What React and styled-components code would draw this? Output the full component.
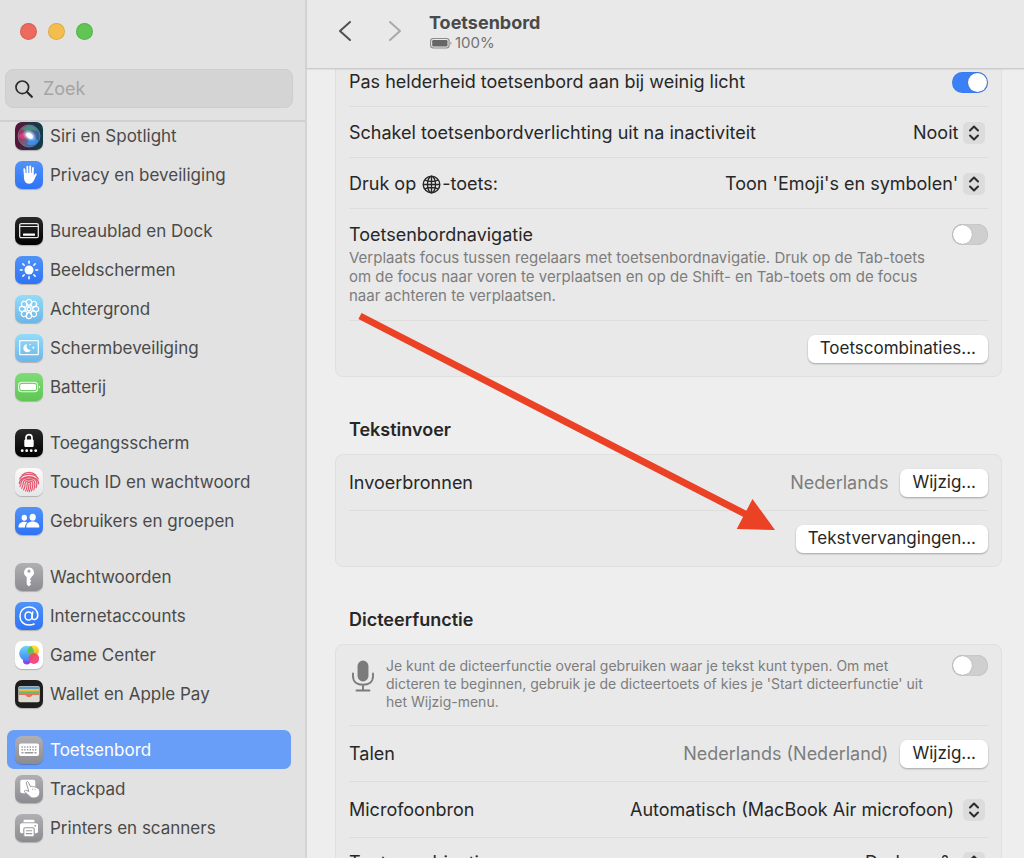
import React from "react";
import styled, { createGlobalStyle, css } from "styled-components";

const GlobalStyle = createGlobalStyle`
  *, *::before, *::after { box-sizing: border-box; }
  body {
    margin: 0;
    background: #eeeeee;
    font-family: Inter, "Liberation Sans", sans-serif;
    font-size: 18px;
    line-height: 22px;
    color: #272727;
  }
  button, input, select { font: inherit; color: inherit; }
`;

const Window = styled.div`
  position: relative;
  display: flex;
  height: 100vh;
  overflow: hidden;
`;

/* ---------- Sidebar ---------- */

const Sidebar = styled.aside`
  flex: 0 0 307px;
  display: flex;
  flex-direction: column;
  background: #e2e2e2;
  border-right: 2px solid #d3d3d3;
  color: #4a4a4a;
  overflow: hidden;
`;

const SidebarTop = styled.div`
  flex: none;
  position: relative;
  z-index: 1;
  background: #e2e2e2;
  border-bottom: 2px solid #d0d0d0;
  padding: 23px 12px 12px 5px;
`;

const TrafficLights = styled.div`
  display: flex;
  gap: 11px;
  padding-left: 15px;
  margin-bottom: 29px;
`;

const Light = styled.button`
  width: 17px;
  height: 17px;
  padding: 0;
  border: 1px solid rgba(0, 0, 0, 0.1);
  border-radius: 50%;
  background: ${(p) => p.$color};
`;

const SearchField = styled.label`
  display: flex;
  align-items: center;
  gap: 10px;
  height: 39px;
  padding: 0 9px;
  border: 1px solid #cecece;
  border-radius: 8px;
  background: #d4d4d4;
  svg { flex: none; }
`;

const SearchInput = styled.input`
  flex: 1;
  min-width: 0;
  border: 0;
  padding: 0;
  outline: 0;
  background: transparent;
  &::placeholder { color: #a4a4a4; opacity: 1; }
`;

const Nav = styled.nav`
  display: flex;
  flex-direction: column;
  gap: 17px;
  margin-top: -6px;
  padding: 0 14px 0 7px;
  font-size: 17px;
`;

const NavGroup = styled.div`
  display: flex;
  flex-direction: column;
`;

const NavItem = styled.a`
  display: flex;
  align-items: center;
  gap: 7px;
  height: 39px;
  padding: 0 8px;
  border-radius: 7px;
  color: ${(p) => (p.$active ? "#ffffff" : "#4a4a4a")};
  background: ${(p) => (p.$active ? "#689df8" : "transparent")};
  text-decoration: none;
  white-space: nowrap;
`;

const tones = {
  blue: "linear-gradient(#4f93f8, #2f73f6)",
  black: "linear-gradient(#2a2a2a, #000000)",
  sky: "linear-gradient(#93dcf9, #6db5e8)",
  green: "linear-gradient(#7fdc78, #5fc653)",
  white: "linear-gradient(#fbfbfb, #e6e6e6)",
  gray: "linear-gradient(#b0b0b4, #8b8b90)",
  plain: "#ffffff",
  wallet: "#1e1e1e",
  siri: "linear-gradient(90deg, #5b1236, #26304a 55%, #0f3d45)",
};

const Tile = styled.span`
  flex: none;
  display: grid;
  width: 28px;
  height: 28px;
  border-radius: 7px;
  overflow: hidden;
  background: ${(p) => tones[p.$tone]};
  box-shadow: 0 1px 1px rgba(0, 0, 0, 0.22);
`;

/* ---------- Main pane ---------- */

const Main = styled.main`
  flex: 1;
  min-width: 0;
  display: flex;
  flex-direction: column;
  background: #eeeeee;
`;

const Toolbar = styled.header`
  flex: none;
  position: relative;
  z-index: 1;
  display: flex;
  align-items: center;
  height: 69px;
  padding: 0 28px 6px;
  background: #e9e9e9;
  border-bottom: 1px solid #cbcbcb;
  box-shadow: 0 1px 1px rgba(0, 0, 0, 0.06);
`;

const ArrowButton = styled.button`
  display: grid;
  place-items: center;
  width: 20px;
  height: 28px;
  margin-right: 30px;
  padding: 0;
  border: 0;
  background: transparent;
  color: ${(p) => (p.disabled ? "#a9a9a9" : "#505050")};
`;

const TitleBlock = styled.div`
  display: flex;
  flex-direction: column;
  margin-left: -6px;
  padding-top: 2px;
`;

const Title = styled.h1`
  margin: 0;
  font-size: 18px;
  line-height: 21px;
  font-weight: 700;
  color: #4a4a4a;
`;

const Status = styled.div`
  display: flex;
  align-items: center;
  gap: 2px;
  font-size: 15px;
  line-height: 20px;
  color: #737373;
`;

const Content = styled.div`
  flex: 1;
  min-height: 0;
  overflow: hidden;
  padding: 0 22px 0 28px;
`;

const ScrolledBody = styled.div`
  margin-top: -14px;
`;

const Card = styled.section`
  border: 1px solid #e0e0e0;
  border-radius: 8px;
  background: #e9e9e9;
  padding: 0 13px;
`;

const SectionTitle = styled.h2`
  display: flex;
  align-items: center;
  height: 77px;
  margin: 0;
  padding: 29px 14px 0;
  font-size: 18px;
  font-weight: 600;
  line-height: 22px;
`;

const Row = styled.div`
  display: flex;
  align-items: center;
  justify-content: space-between;
  gap: 12px;
  min-height: ${(p) => (p.$tall ? 56 : 51)}px;
  padding: ${(p) => p.$top || (p.$tall ? "0" : "2px 0 0")};
  border-bottom: 1px solid #dddddd;
  &:last-child {
    min-height: ${(p) => (p.$tall ? 55 : 48)}px;
    border-bottom: 0;
  }
  ${(p) =>
    p.$top &&
    css`
      align-items: flex-start;
    `}
`;

const Label = styled.label`
  display: inline-flex;
  align-items: center;
  gap: 1px;
  white-space: pre;
`;

const Stack = styled.div`
  display: flex;
  flex-direction: column;
  gap: 2px;
  max-width: 598px;
`;

const Description = styled.p`
  margin: 0;
  font-size: ${(p) => (p.$small ? 14 : 15)}px;
  line-height: ${(p) => (p.$small ? 18 : 19)}px;
  color: #7d7d7d;
`;

const DictationInfo = styled.div`
  display: flex;
  gap: 11px;
  padding: 2px 0 0 2px;
  svg { flex: none; margin-top: 3px; }
`;

const Trailing = styled.div`
  display: flex;
  align-items: center;
  gap: 12px;
  margin-left: auto;
  color: #7d7d7d;
  white-space: nowrap;
`;

const PushButton = styled.button`
  height: 28px;
  padding: 0 12px 1px;
  border: 0;
  border-radius: 7px;
  background: #ffffff;
  box-shadow: 0 1px 2px rgba(0, 0, 0, 0.3);
  font-size: 17px;
  line-height: 22px;
  color: #272727;
  white-space: nowrap;
`;

const Switch = styled.input.attrs({ type: "checkbox" })`
  appearance: none;
  flex: none;
  display: flex;
  align-items: center;
  width: 36px;
  height: 21px;
  margin: 0;
  padding: 0 1px;
  border-radius: 11px;
  background: #cfcfcf;
  box-shadow: inset 0 0 1px rgba(0, 0, 0, 0.3);
  &::before {
    content: "";
    width: 19px;
    height: 19px;
    border-radius: 50%;
    background: #ffffff;
    box-shadow: 0 0 1px rgba(0, 0, 0, 0.4);
  }
  &:checked {
    justify-content: flex-end;
    background: #3b80f7;
  }
`;

const Popup = styled.div`
  display: grid;
  align-items: center;
  margin-right: 3px;
  > * { grid-area: 1 / 1; }
`;

const Select = styled.select`
  appearance: none;
  border: 0;
  margin: 0;
  padding: 0 ${(p) => p.$inset}px 0 0;
  background: transparent;
  line-height: 22px;
`;

const PopupIcons = styled.span`
  justify-self: end;
  display: flex;
  align-items: center;
  gap: 12px;
  pointer-events: none;
`;

const Stepper = styled.span`
  display: grid;
  place-items: center;
  width: 22px;
  height: 22px;
  border-radius: 5px;
  background: #dcdcdc;
`;

const Annotation = styled.svg`
  position: absolute;
  left: 357px;
  top: 310px;
  z-index: 2;
  pointer-events: none;
`;

/* ---------- Icons ---------- */

const Svg = ({ children, ...rest }) => (
  <svg width="28" height="28" viewBox="0 0 28 28" fill="none" aria-hidden="true" {...rest}>
    {children}
  </svg>
);

const petals = [0, 45, 90, 135, 180, 225, 270, 315];

const icons = {
  siri: (
    <Svg>
      <defs>
        <radialGradient id="siriGlow">
          <stop offset="0" stopColor="#ffffff" />
          <stop offset="0.4" stopColor="#e6f0ff" stopOpacity="0.9" />
          <stop offset="1" stopColor="#8ab4ff" stopOpacity="0" />
        </radialGradient>
        <linearGradient id="siriBall" x1="0" y1="0.3" x2="1" y2="0.7">
          <stop offset="0" stopColor="#d4285f" />
          <stop offset="0.45" stopColor="#8c7a98" />
          <stop offset="1" stopColor="#1f6fd0" />
        </linearGradient>
      </defs>
      <circle cx="14" cy="14" r="11" fill="url(#siriBall)" fillOpacity="0.7" stroke="#8295a5" strokeOpacity="0.6" />
      <path d="M6 8c4-5.500 13-5.500 17 1-4-2-8-1-10 1-2-2-5-2.500-7-2z" fill="#2fa584" fillOpacity="0.75" />
      <path d="M4 13c3-3 7-2 10 1-2 3-7 4-10 1z" fill="#ef3f72" fillOpacity="0.75" />
      <path d="M14 15c4 0 8 1 9 4-3 5-8 5-11 3z" fill="#3c9bff" fillOpacity="0.75" />
      <ellipse cx="14.500" cy="13.500" rx="8" ry="5.500" transform="rotate(30 14.500 13.500)" fill="url(#siriGlow)" />
      <ellipse cx="14.500" cy="13.800" rx="3.800" ry="2.200" transform="rotate(40 14.500 13.800)" fill="#fff" />
    </Svg>
  ),
  hand: (
    <Svg>
      <g stroke="#fff" strokeWidth="1.900" strokeLinecap="round">
        <path d="M9.300 8.200 10 15M12.300 5.800l.2 9M15.200 5.500v9M18 7l-.5 8M20.800 13.300 18.300 18" />
      </g>
      <path d="M8.900 12h9.800v5.500l1.300-1.800c-.6 3.700-2.200 7-6 7-3.600 0-5-3-5.100-6.700z" fill="#fff" />
    </Svg>
  ),
  dock: (
    <Svg>
      <rect x="4.700" y="6.700" width="18.600" height="14" rx="1.500" stroke="#e8e8e8" strokeWidth="1.300" />
      <path d="M5 9.500h18" stroke="#e8e8e8" />
      <rect x="8" y="16.500" width="12" height="2.300" rx=".5" fill="#fff" />
    </Svg>
  ),
  sun: (
    <Svg>
      <circle cx="14" cy="14" r="4.500" fill="#fff" />
      <g stroke="#fff" strokeWidth="1.500" strokeLinecap="round">
        {petals.map((a) => (
          <path key={a} d="M14 5.300v1.900" transform={`rotate(${a} 14 14)`} />
        ))}
      </g>
    </Svg>
  ),
  flower: (
    <Svg>
      <g stroke="#fff" strokeWidth="1.200">
        {petals.map((a) => (
          <ellipse key={a} cx="14" cy="7.300" rx="2.700" ry="3" transform={`rotate(${a} 14 14)`} />
        ))}
        {petals.map((a) => (
          <path key={a} d="M14 12.500v-2.200" transform={`rotate(${a} 14 14)`} />
        ))}
      </g>
      <circle cx="14" cy="14" r="1.900" stroke="#fff" strokeWidth="1.100" />
    </Svg>
  ),
  screensaver: (
    <Svg>
      <rect x="4.700" y="6.700" width="18.600" height="14" rx=".6" stroke="#f4fbff" strokeWidth="1.300" />
      <path d="M12 10.200a4 4 0 1 0 4 5.600 3.800 3.800 0 0 1-4-5.600z" fill="#fff" />
      <path d="m18.300 12 .5 1.200 1.200.5-1.200.5-.5 1.200-.5-1.200-1.200-.5 1.200-.5zM15 9.500l.3.800.8.300-.8.300-.3.800-.3-.8-.8-.3.800-.3z" fill="#fff" />
    </Svg>
  ),
  battery: (
    <Svg>
      <rect x="3.600" y="9.300" width="19" height="9.400" rx="3" stroke="#fff" strokeOpacity=".85" strokeWidth="1.100" />
      <rect x="5.200" y="10.900" width="15.800" height="6.200" rx="1.500" fill="#fff" />
      <path d="M24 12.700c1.300.4 1.300 2.200 0 2.600z" fill="#fff" />
    </Svg>
  ),
  lock: (
    <Svg>
      <path d="M11 11V8.600c0-4 6-4 6 0V11" stroke="#fff" strokeWidth="1.700" />
      <rect x="9.300" y="10.500" width="9.400" height="7.500" rx="1.200" fill="#fff" />
      {[7.200, 11.700, 16.200, 20.700].map((x) => (
        <circle key={x} cx={x} cy="21.700" r="1.400" fill="#fff" />
      ))}
    </Svg>
  ),
  touch: (
    <Svg>
      <g stroke="#e4566e" strokeWidth="1.200" strokeLinecap="round">
        <path d="M7 7.200c4-3.900 10-3.900 14 0" />
        <path d="M4.700 11c2.700-6.200 15.900-6.200 18.600 0" />
        <path d="M4.400 15.800c-.4-9.500 19.600-9.500 19.200 0M5 18.500c1-1 1.100-2.200 1.200-3.700.4-6.700 15.200-6.700 15.600 0 .1 1.900-.1 3.200-.6 4.800" />
        <path d="M6.700 20.300c1.300-1.700 1.400-3.600 1.500-5.200.3-5.100 11.300-5.100 11.600 0 .1 2.500-.2 4.500-1 6.700" />
        <path d="M8.500 21.800c1.500-2 1.600-4.500 1.700-6.300.2-3.600 7.400-3.600 7.600 0 .1 2.600-.3 5-1.300 7.500" />
        <path d="M10.600 23c1.400-2.300 1.600-5 1.600-7 .1-2.200 3.500-2.200 3.600 0 .1 2.700-.4 5.200-1.500 7.700" />
        <path d="M14 16c0 2.600-.4 4.900-1.400 7.300" />
      </g>
    </Svg>
  ),
  users: (
    <Svg>
      <g fill="#fff">
        <ellipse cx="9.300" cy="10.800" rx="2.700" ry="3" />
        <path d="M3.600 20.500c-.5-3.500 2.300-5.700 5.700-5.700 1.200 0 2.200.2 3 .7-1.500 1.200-2.300 3-2.300 5z" />
        <ellipse cx="17.700" cy="10.200" rx="3.100" ry="3.500" />
        <path d="M11.300 20.500c-.4-3.800 2.500-6 6.400-6s7 2.200 6.600 6z" />
      </g>
    </Svg>
  ),
  key: (
    <Svg>
      <path
        fillRule="evenodd"
        d="M14 4.500a5 5 0 0 0-2.300 9.400v7.300l2.100 2.400 2.400-2.300-1.400-1.700 1.500-1.600-1.400-1.700 1.400-1.500v-.9A5 5 0 0 0 14 4.500zm0 2.100a1.600 1.600 0 1 1 0 3.200 1.600 1.600 0 0 1 0-3.200z"
        fill="#fff"
      />
    </Svg>
  ),
  at: (
    <Svg>
      <g stroke="#fff" strokeWidth="1.500" strokeLinecap="round">
        <ellipse cx="13.600" cy="14" rx="3.600" ry="4.100" />
        <path d="M17.700 9.900l-.7 5.700c-.2 3 5.800 2.700 5.800-2.400 0-5-3.700-8.200-8.600-8.200-5.500 0-9.200 3.800-9.200 9.200 0 5.300 3.700 8.800 9.200 8.800 2 0 3.400-.3 4.900-1" />
      </g>
    </Svg>
  ),
  game: (
    <Svg>
      <defs>
        <linearGradient id="gcBlue" x1="0" y1="0" x2="0" y2="1">
          <stop offset="0" stopColor="#6fd6f7" />
          <stop offset="1" stopColor="#3f86f5" />
        </linearGradient>
        <linearGradient id="gcYellow" x1="0" y1="0" x2="0" y2="1">
          <stop offset="0" stopColor="#fde935" />
          <stop offset="1" stopColor="#f7a02c" />
        </linearGradient>
      </defs>
      <circle cx="11.800" cy="19.800" r="3.800" fill="#9a3df0" />
      <circle cx="18.300" cy="9.800" r="5.600" fill="url(#gcYellow)" />
      <circle cx="11.800" cy="12.300" r="7.600" fill="url(#gcBlue)" />
      <path d="M13.200 7.500a5.600 5.600 0 0 0 3.500 7.700 7.600 7.600 0 0 0 1.400-7.200 7.600 7.600 0 0 0-2.200-3 5.600 5.600 0 0 0-2.700 2.500z" fill="#62bf56" />
      <circle cx="18.900" cy="17.600" r="5.300" fill="#f0407a" fillOpacity=".93" />
      <path d="M15.500 13.500a5.300 5.300 0 0 1 6.700-.2l-1.500 2.500-4.500.7z" fill="#ee5a3a" fillOpacity=".7" />
    </Svg>
  ),
  wallet: (
    <Svg>
      <rect x="3.300" y="6" width="21.400" height="16.200" rx="1.800" fill="#dcd9cf" />
      <path d="M4 7.500C4 6.700 4.500 6.500 5 6.500h18c.5 0 1 .2 1 1v1.700H4z" fill="#5e9cc4" />
      <path d="M4 9.200h20v2.100H4z" fill="#efb945" />
      <path d="M4 11.300h20v2.100H4z" fill="#68b76a" />
      <path d="M4 13.300h20v1.800h-6.200c-.8 0-1 2.200-3.800 2.200s-3-2.200-3.800-2.200H4z" fill="#e8705d" />
    </Svg>
  ),
  keyboard: (
    <Svg>
      <rect x="4" y="7.500" width="20" height="12.500" rx="2" fill="#fff" />
      <g stroke="#99999d" strokeWidth="1.500">
        <path d="M6.500 11h15" strokeDasharray="1.400 1.300" />
        <path d="M6.500 13.800h15" strokeDasharray="1.400 1.300" />
        <path d="M6.500 16.800h2M9.700 16.800h8.600M19.500 16.800h2" />
      </g>
    </Svg>
  ),
  trackpad: (
    <Svg>
      <rect x="5.300" y="4.800" width="15" height="13.500" rx="1.800" fill="#fff" />
      <path
        d="M11.300 8c-.4-1.400 1.500-2 2.100-.7l2.100 4.500c1-.7 2-.5 2.300.1.900-.6 1.800-.3 2.200.3.900-.3 1.700 0 2 .8 1.100 0 2 .7 2.400 2.100 1.200 4-.4 7-4.300 7.800-3 .6-4.600-.7-6-2.200l-4.300-3.500c-1-1.200.2-2.200 1.400-1.800l2.600 1z"
        fill="#fff"
        stroke="#99999d"
        strokeWidth="1"
      />
      <path d="M17.200 13.500l.7 1.500M19.700 13.700l.6 1.300" stroke="#99999d" strokeWidth=".7" />
    </Svg>
  ),
  printer: (
    <Svg>
      <path d="M8.500 8.200V7c0-.8.500-1.300 1.300-1.300h8.400c.8 0 1.300.5 1.300 1.300v1.200z" fill="#fff" />
      <path d="M7 9.200h14c1.300 0 2 .8 2 2v6.300c0 1.100-.7 1.700-1.800 1.700H6.800c-1.100 0-1.800-.6-1.800-1.700v-6.300c0-1.200.7-2 2-2z" fill="#fff" />
      <circle cx="20.200" cy="11.800" r=".9" fill="#99999d" />
      <rect x="8.800" y="13.700" width="10.400" height="9" rx="1.200" fill="#fff" stroke="#99999d" strokeWidth="1.100" />
      <path d="M10.900 16.800h6.200M10.900 19.600h6.200" stroke="#99999d" strokeWidth="1.100" />
    </Svg>
  ),
};

const SearchIcon = () => (
  <svg width="18" height="18" viewBox="0 0 18 18" fill="none" aria-hidden="true">
    <circle cx="7.300" cy="7.300" r="6.300" stroke="#2b2b2b" strokeWidth="1.700" />
    <path d="m12 12 4.800 4.800" stroke="#2b2b2b" strokeWidth="2.200" strokeLinecap="round" />
  </svg>
);

const Chevron = ({ flip }) => (
  <svg width="20" height="22" viewBox="0 0 20 22" fill="none" aria-hidden="true">
    <path
      d={flip ? "m5 2 10 9-10 9" : "M15 2 5 11l10 9"}
      stroke="currentColor"
      strokeWidth="2"
      strokeLinecap="round"
      strokeLinejoin="round"
    />
  </svg>
);

const BatteryIcon = () => (
  <svg width="24" height="12" viewBox="0 0 24 12" fill="none" aria-hidden="true">
    <rect x="1.600" y="1.500" width="18.500" height="9.500" rx="2.700" stroke="#8a8a8a" strokeWidth="1.100" />
    <rect x="3.200" y="3" width="15.300" height="6.500" rx="1.300" fill="#666" />
    <path d="M21.500 4.700c1.300.3 1.300 2.700 0 3z" fill="#8a8a8a" />
  </svg>
);

const GlobeIcon = () => (
  <svg width="19" height="19" viewBox="0 0 19 19" fill="none" stroke="#272727" strokeWidth="1.400" aria-hidden="true">
    <circle cx="9.500" cy="9.500" r="8.300" />
    <ellipse cx="9.500" cy="9.500" rx="4" ry="8.300" />
    <path d="M9.500 1.200v16.600M1.200 9.500h16.600M2.800 5.200c4.200 1.700 9.200 1.700 13.400 0M2.800 13.800c4.200-1.700 9.200-1.700 13.400 0" />
  </svg>
);

const MicIcon = ({ small }) => (
  <svg
    width={small ? 12 : 24}
    height={small ? 18 : 32}
    viewBox="0 0 24 32"
    fill="none"
    stroke={small ? "#272727" : "#7b7b7b"}
    strokeWidth={small ? 2.6 : 1.9}
    strokeLinecap="round"
    aria-hidden="true"
  >
    <rect x="7.500" y="1.500" width="9" height="19" rx="4.500" fill={small ? "none" : "#7b7b7b"} />
    <path d="M2 13.500v2.800c0 5.600 4.300 8.500 10 8.500s10-2.900 10-8.500v-2.800M12 25v5.500M5.500 30.500h13" />
  </svg>
);

const StepperIcon = () => (
  <Stepper>
    <svg width="12" height="18" viewBox="0 0 12 18" fill="none" stroke="#2b2b2b" strokeWidth="2" strokeLinecap="round" strokeLinejoin="round" aria-hidden="true">
      <path d="M2 6.500 6 2.500l4 4M2 11.500l4 4 4-4" />
    </svg>
  </Stepper>
);

/* ---------- Composition ---------- */

const groups = [
  [
    ["Siri en Spotlight", "siri", "siri"],
    ["Privacy en beveiliging", "blue", "hand"],
  ],
  [
    ["Bureaublad en Dock", "black", "dock"],
    ["Beeldschermen", "blue", "sun"],
    ["Achtergrond", "sky", "flower"],
    ["Schermbeveiliging", "sky", "screensaver"],
    ["Batterij", "green", "battery"],
  ],
  [
    ["Toegangsscherm", "black", "lock"],
    ["Touch ID en wachtwoord", "white", "touch"],
    ["Gebruikers en groepen", "blue", "users"],
  ],
  [
    ["Wachtwoorden", "gray", "key"],
    ["Internetaccounts", "blue", "at"],
    ["Game Center", "plain", "game"],
    ["Wallet en Apple Pay", "wallet", "wallet"],
  ],
  [
    ["Toetsenbord", "gray", "keyboard"],
    ["Trackpad", "gray", "trackpad"],
    ["Printers en scanners", "gray", "printer"],
  ],
];

const PopupMenu = ({ id, value, inset = 26, children }) => (
  <Popup>
    <Select id={id} $inset={inset} defaultValue={value}>
      <option>{value}</option>
    </Select>
    <PopupIcons>
      {children}
      <StepperIcon />
    </PopupIcons>
  </Popup>
);

export default function App() {
  return (
    <>
      <GlobalStyle />
      <Window>
        <Sidebar>
          <SidebarTop>
            <TrafficLights>
              <Light $color="#ec6a5e" aria-label="Sluit" />
              <Light $color="#f4be4f" aria-label="Minimaliseer" />
              <Light $color="#61c554" aria-label="Zoom" />
            </TrafficLights>
            <SearchField>
              <SearchIcon />
              <SearchInput type="text" placeholder="Zoek" aria-label="Zoek" />
            </SearchField>
          </SidebarTop>
          <Nav>
            {groups.map((items) => (
              <NavGroup key={items[0][0]}>
                {items.map(([name, tone, icon]) => (
                  <NavItem key={name} href={`#${icon}`} $active={icon === "keyboard"}>
                    <Tile $tone={tone}>{icons[icon]}</Tile>
                    {name}
                  </NavItem>
                ))}
              </NavGroup>
            ))}
          </Nav>
        </Sidebar>

        <Main>
          <Toolbar>
            <ArrowButton aria-label="Vorige">
              <Chevron />
            </ArrowButton>
            <ArrowButton aria-label="Volgende" disabled>
              <Chevron flip />
            </ArrowButton>
            <TitleBlock>
              <Title>Toetsenbord</Title>
              <Status>
                <BatteryIcon />
                100%
              </Status>
            </TitleBlock>
          </Toolbar>

          <Content>
            <ScrolledBody>
              <Card>
                <Row>
                  <Label htmlFor="brightness">Pas helderheid toetsenbord aan bij weinig licht</Label>
                  <Switch id="brightness" defaultChecked />
                </Row>
                <Row>
                  <Label htmlFor="backlight">Schakel toetsenbordverlichting uit na inactiviteit</Label>
                  <PopupMenu id="backlight" value="Nooit" />
                </Row>
                <Row>
                  <Label htmlFor="globe">
                    {"Druk op "}
                    <GlobeIcon />
                    -toets:
                  </Label>
                  <PopupMenu id="globe" value="Toon 'Emoji's en symbolen'" />
                </Row>
                <Row $top="15px 0">
                  <Stack>
                    <Label htmlFor="navigation">Toetsenbordnavigatie</Label>
                    <Description>
                      Verplaats focus tussen regelaars met toetsenbordnavigatie. Druk op de Tab-toets om de focus naar
                      voren te verplaatsen en op de Shift- en Tab-toets om de focus naar achteren te verplaatsen.
                    </Description>
                  </Stack>
                  <Switch id="navigation" />
                </Row>
                <Row $tall>
                  <Trailing>
                    <PushButton>Toetscombinaties...</PushButton>
                  </Trailing>
                </Row>
              </Card>

              <SectionTitle>Tekstinvoer</SectionTitle>
              <Card>
                <Row $tall>
                  <span>Invoerbronnen</span>
                  <Trailing>
                    Nederlands
                    <PushButton>Wijzig...</PushButton>
                  </Trailing>
                </Row>
                <Row $tall>
                  <Trailing>
                    <PushButton>Tekstvervangingen...</PushButton>
                  </Trailing>
                </Row>
              </Card>

              <SectionTitle>Dicteerfunctie</SectionTitle>
              <Card>
                <Row $top="10px 0 14px">
                  <DictationInfo>
                    <MicIcon />
                    <Stack>
                      <Description $small as="label" htmlFor="dictation">
                        Je kunt de dicteerfunctie overal gebruiken waar je tekst kunt typen. Om met dicteren te
                        beginnen, gebruik je de dicteertoets of kies je 'Start dicteerfunctie' uit het Wijzig-menu.
                      </Description>
                    </Stack>
                  </DictationInfo>
                  <Switch id="dictation" />
                </Row>
                <Row $tall>
                  <span>Talen</span>
                  <Trailing>
                    Nederlands (Nederland)
                    <PushButton>Wijzig...</PushButton>
                  </Trailing>
                </Row>
                <Row $tall>
                  <Label htmlFor="microphone">Microfoonbron</Label>
                  <PopupMenu id="microphone" value="Automatisch (MacBook Air microfoon)" inset={30} />
                </Row>
                <Row>
                  <Label htmlFor="shortcut">Toetscombinatie</Label>
                  <PopupMenu id="shortcut" value="Druk op" inset={52}>
                    <MicIcon small />
                  </PopupMenu>
                </Row>
              </Card>
            </ScrolledBody>
          </Content>
        </Main>

        <Annotation width="420" height="224" viewBox="0 0 420 224" aria-hidden="true">
          <path d="M3 6 392 206" stroke="#eb4226" strokeWidth="7" />
          <path d="M395.500 189 379.700 219 418 220z" fill="#eb4226" />
        </Annotation>
      </Window>
    </>
  );
}
